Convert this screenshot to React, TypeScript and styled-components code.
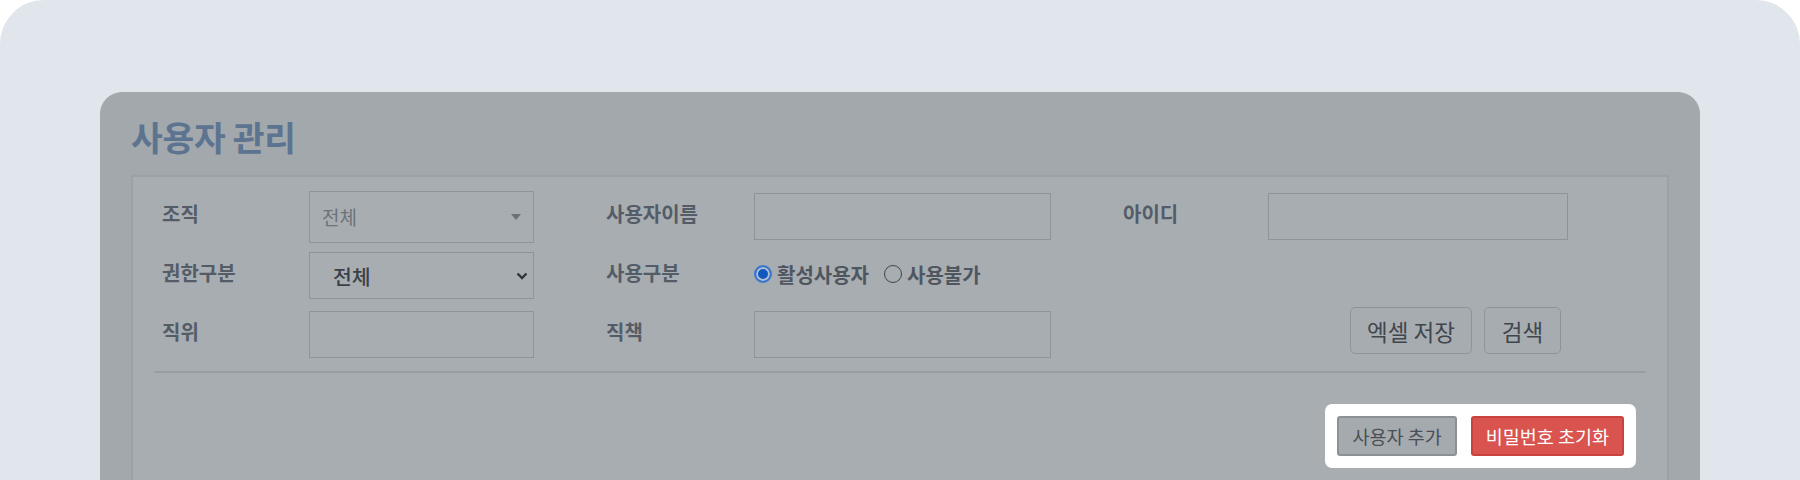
import React from "react";
import styled, { createGlobalStyle } from "styled-components";

const Global = createGlobalStyle`
  html, body { margin: 0; padding: 0; background: #ffffff; }
  body { font-family: "Noto Sans CJK KR", "Noto Sans", sans-serif; }
  * { box-sizing: border-box; }
`;

const Stage = styled.div`
  width: 1800px;
  height: 480px;
  background: #e1e6ed;
  border-radius: 44px 44px 0 0;
  padding-top: 92px;
  overflow: hidden;
`;

const Card = styled.section`
  margin: 0 100px;
  height: 420px;
  background: #a3a8ac;
  border-radius: 22px 22px 0 0;
  padding: 22px 31px 0;
`;

const Title = styled.h1`
  margin: 0 0 17px;
  font-size: 34.5px;
  line-height: 44px;
  font-weight: 700;
  color: #5d7490;
  letter-spacing: -0.3px;
`;

const SearchBox = styled.div`
  border: 2px solid #9ca1a5;
  background: #a8adb1;
  padding: 10px 21px 60px;
`;

const Form = styled.div`
  padding-left: 8px;
`;

const Row = styled.div`
  display: grid;
  grid-template-columns: 372px 445px 445px;
  column-gap: 72px;
  height: 59px;
  align-items: center;
`;

const Group = styled.div<{ $label: number }>`
  display: grid;
  grid-template-columns: ${(p) => p.$label}px 1fr;
  align-items: center;
`;

const Label = styled.span`
  font-size: 20px;
  font-weight: 700;
  color: #545c67;
  padding-bottom: 7px;
`;

const SelectBox = styled.div<{ $tall?: boolean; $strong?: boolean }>`
  height: ${(p) => (p.$tall ? 52 : 47)}px;
  border: 1.5px solid #8f9499;
  display: flex;
  align-items: center;
  justify-content: space-between;
  padding: 0 ${(p) => (p.$strong ? 5 : 12)}px 0 ${(p) => (p.$strong ? 23 : 12)}px;
  font-size: ${(p) => (p.$strong ? 20.5 : 19)}px;
  font-weight: ${(p) => (p.$strong ? 500 : 400)};
  color: ${(p) => (p.$strong ? "#3b4149" : "#6d737a")};
`;

const TextInput = styled.input`
  height: 47px;
  width: 100%;
  border: 1.5px solid #8f9499;
  background: transparent;
  margin: 0;
  font: inherit;
`;

const Radios = styled.div`
  display: flex;
  align-items: center;
  padding-bottom: 3px;
`;

const RadioLabel = styled.label`
  display: flex;
  align-items: center;
  gap: 5px;
  margin-right: 15px;
  font-size: 20px;
  font-weight: 700;
  color: #4f5660;
`;

const Radio = styled.input.attrs({ type: "radio" })`
  appearance: none;
  margin: 0;
  width: 18px;
  height: 18px;
  border-radius: 50%;
  border: 1.5px solid #41464d;
  background: transparent;
  &:checked {
    border: 2px solid #3b77cf;
    background: #1257c0;
    box-shadow: inset 0 0 0 2px #b2c0d3;
  }
`;

const ActionCell = styled.div`
  display: flex;
  justify-content: flex-end;
  gap: 12px;
  padding-right: 7px;
  align-self: start;
  margin-top: 2px;
`;

const GhostButton = styled.button<{ $w: number }>`
  width: ${(p) => p.$w}px;
  height: 47px;
  border: 1.5px solid #8f9499;
  border-radius: 5px;
  background: #a7acb0;
  font-family: inherit;
  font-size: 22.5px;
  color: #41464d;
  padding: 0;
`;

const Divider = styled.hr`
  margin: 7px 0 0;
  border: 0;
  height: 2px;
  background: #999ea2;
`;

const BottomBar = styled.div`
  display: flex;
  justify-content: flex-end;
  padding: 31px 10px 0 0;
`;

const Spotlight = styled.div`
  display: flex;
  gap: 14px;
  padding: 12px;
  background: #ffffff;
  border-radius: 7px;
`;

const ActionButton = styled.button<{ $danger?: boolean }>`
  height: 40px;
  padding: 0 13px;
  border-radius: 3px;
  border: 2px solid ${(p) => (p.$danger ? "#c8433f" : "#8c9196")};
  background: ${(p) => (p.$danger ? "#d9534f" : "#a5aaaf")};
  color: ${(p) => (p.$danger ? "#ffffff" : "#4a4f57")};
  font-family: inherit;
  font-size: 18.5px;
`;

const Caret = () => (
  <svg width="10" height="6" viewBox="0 0 10 6">
    <path d="M0 0 L10 0 L5 6 Z" fill="#6a7077" />
  </svg>
);

const Chevron = () => (
  <svg width="12" height="8" viewBox="0 0 12 8">
    <path d="M1.5 1.5 L6 6 L10.5 1.5" fill="none" stroke="#30353c" strokeWidth="2.4" />
  </svg>
);

export default function App() {
  return (
    <>
      <Global />
      <Stage>
        <Card>
          <Title>사용자 관리</Title>
          <SearchBox>
            <Form>
              <Row>
                <Group $label={147}>
                  <Label>조직</Label>
                  <SelectBox $tall>
                    <span>전체</span>
                    <Caret />
                  </SelectBox>
                </Group>
                <Group $label={148}>
                  <Label>사용자이름</Label>
                  <TextInput />
                </Group>
                <Group $label={145}>
                  <Label>아이디</Label>
                  <TextInput />
                </Group>
              </Row>
              <Row>
                <Group $label={147}>
                  <Label>권한구분</Label>
                  <SelectBox $strong>
                    <span>전체</span>
                    <Chevron />
                  </SelectBox>
                </Group>
                <Group $label={148}>
                  <Label>사용구분</Label>
                  <Radios>
                    <RadioLabel>
                      <Radio name="use" defaultChecked />
                      활성사용자
                    </RadioLabel>
                    <RadioLabel>
                      <Radio name="use" />
                      사용불가
                    </RadioLabel>
                  </Radios>
                </Group>
                <div />
              </Row>
              <Row>
                <Group $label={147}>
                  <Label>직위</Label>
                  <TextInput />
                </Group>
                <Group $label={148}>
                  <Label>직책</Label>
                  <TextInput />
                </Group>
                <ActionCell>
                  <GhostButton $w={122}>엑셀 저장</GhostButton>
                  <GhostButton $w={77}>검색</GhostButton>
                </ActionCell>
              </Row>
            </Form>
            <Divider />
            <BottomBar>
              <Spotlight>
                <ActionButton>사용자 추가</ActionButton>
                <ActionButton $danger>비밀번호 초기화</ActionButton>
              </Spotlight>
            </BottomBar>
          </SearchBox>
        </Card>
      </Stage>
    </>
  );
}
